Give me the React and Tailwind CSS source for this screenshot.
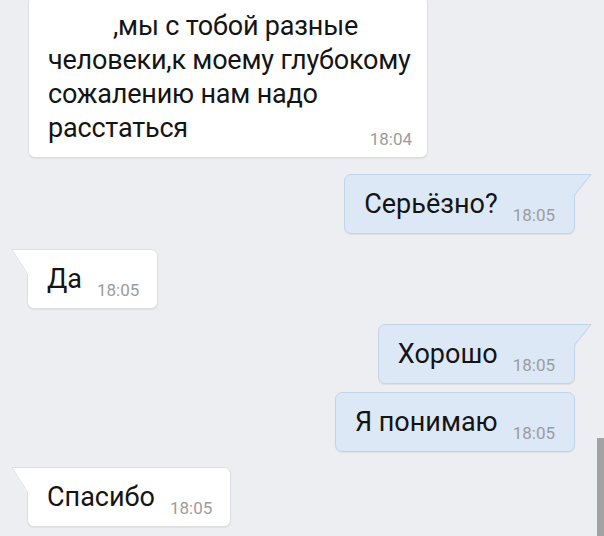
import React from 'react';

function Tail({ side, fill, stroke }) {
    if (side === 'left') {
        return (
            <svg className="absolute left-[-17px] top-[-1px]" width="19" height="28" viewBox="0 0 19 28">
                <polygon points="0,0 19,0 19,26 16,26" fill={fill} />
                <polyline points="19,0.5 0.9,0.5 16.5,25 16.5,28" fill="none" stroke={stroke} strokeWidth="1" />
            </svg>
        );
    }
    return (
        <svg className="absolute right-[-18px] top-[-1px]" width="20" height="24" viewBox="0 0 20 24">
            <polygon points="0,0 20,0 3,22 0,22" fill={fill} />
            <polyline points="0,0.5 19,0.5 2.5,21 2.5,24" fill="none" stroke={stroke} strokeWidth="1" />
        </svg>
    );
}

function Bubble({ out, tail, text, time, className = '' }) {
    const fill = out ? '#dce8f6' : '#ffffff';
    const stroke = out ? '#c4d4e7' : '#dcdfe3';
    return (
        <div
            className={
                'relative flex items-end gap-[15px] rounded-[7px] border pt-[12px] pb-[12px] shadow-[0_1px_1px_rgba(0,0,0,0.06)] ' +
                (out ? 'bg-[#dce8f6] border-[#c4d4e7] pl-[19px] pr-[19px] ' : 'bg-white border-[#dcdfe3] pl-[19px] pr-[18px] ') +
                (tail && out ? 'rounded-tr-none ' : '') +
                (tail && !out ? 'rounded-tl-none ' : '') +
                className
            }
        >
            {tail && <Tail side={out ? 'right' : 'left'} fill={fill} stroke={stroke} />}
            <span className="whitespace-nowrap text-[27px] leading-[34px] text-[#141414]">{text}</span>
            <span className="mb-[-3px] text-[17px] leading-none text-[#9c9c9c]">{time}</span>
        </div>
    );
}

export default function App() {
    return (
        <div className="relative h-[536px] w-[604px] overflow-hidden bg-[#edeef1] font-['Roboto',sans-serif]">
            <div className="flex flex-col">
                <div className="ml-[28px] mt-[-4px] flex">
                    <div className="w-[400px] rounded-[7px] border border-[#dcdfe3] bg-white pl-[19px] pr-[15px] pt-[12px] pb-[12px] shadow-[0_1px_1px_rgba(0,0,0,0.06)]">
                        <div className="whitespace-nowrap text-[27px] leading-[34px] tracking-[-0.2px] text-[#141414]">
                            <div className="pl-[65px]">,мы с тобой разные</div>
                            <div>человеки,к моему глубокому</div>
                            <div>сожалению нам надо</div>
                            <div className="flex items-end justify-between">
                                <span>расстаться</span>
                                <span className="mb-[-3px] text-[17px] leading-none tracking-normal text-[#9c9c9c]">18:04</span>
                            </div>
                        </div>
                    </div>
                </div>

                <div className="mr-[29px] mt-[16px] flex justify-end">
                    <Bubble out tail text="Серьёзно?" time="18:05" />
                </div>

                <div className="ml-[27px] mt-[15px] flex">
                    <Bubble tail text="Да" time="18:05" />
                </div>

                <div className="mr-[29px] mt-[15px] flex justify-end">
                    <Bubble out tail text="Хорошо" time="18:05" />
                </div>

                <div className="mr-[29px] mt-[8px] flex justify-end">
                    <Bubble out text="Я понимаю" time="18:05" />
                </div>

                <div className="ml-[27px] mt-[15px] flex">
                    <Bubble tail text="Спасибо" time="18:05" />
                </div>
            </div>

            <div className="absolute bottom-0 right-0 h-[98px] w-[7px] bg-[#a3a3a3]" />
        </div>
    );
}
